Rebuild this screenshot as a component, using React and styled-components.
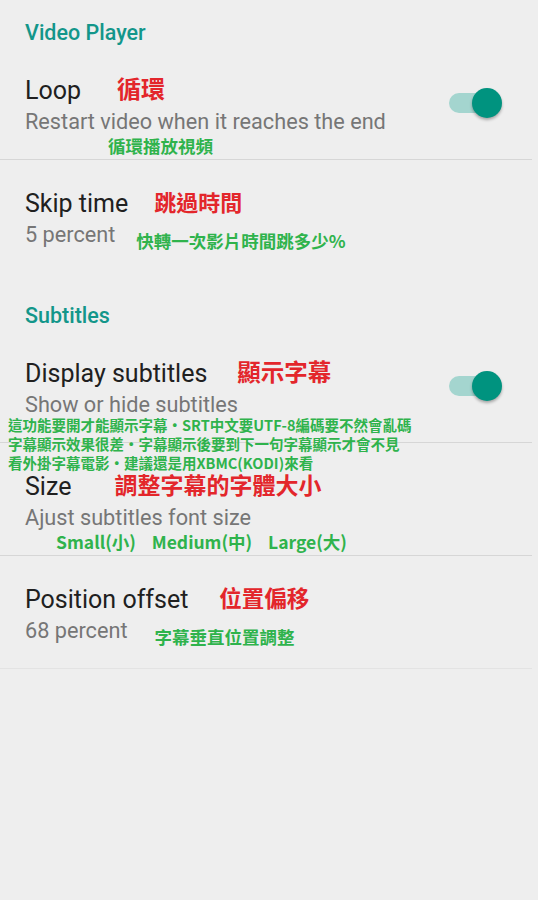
import React from 'react';
import styled, { createGlobalStyle } from 'styled-components';

const GlobalStyle = createGlobalStyle`
  html, body {
    margin: 0;
    padding: 0;
    background: #eeeeee;
  }
  body {
    font-family: Roboto, "Noto Sans", "Noto Sans CJK TC", sans-serif;
  }
`;

const SECTIONS = [
  {
    title: 'Video Player',
    first: true,
    items: [
      {
        title: 'Loop',
        redNote: '循環',
        redSize: 24,
        redGap: 36,
        summary: 'Restart video when it reaches the end',
        below: '循環播放視頻',
        belowGap: 83,
        toggle: true,
        divider: true,
      },
      {
        title: 'Skip time',
        redNote: '跳過時間',
        redSize: 22,
        redGap: 26,
        summary: '5 percent',
        inlineNote: '快轉一次影片時間跳多少%',
        inlineGap: 21,
      },
    ],
  },
  {
    title: 'Subtitles',
    items: [
      {
        title: 'Display subtitles',
        redNote: '顯示字幕',
        redSize: 23.5,
        redGap: 30,
        summary: 'Show or hide subtitles',
        toggle: true,
        divider: true,
        overlay: [
          '這功能要開才能顯示字幕・SRT中文要UTF-8編碼要不然會亂碼',
          '字幕顯示效果很差・字幕顯示後要到下一句字幕顯示才會不見',
          '看外掛字幕電影・建議還是用XBMC(KODI)來看',
        ],
      },
      {
        title: 'Size',
        redNote: '調整字幕的字體大小',
        redSize: 23,
        redGap: 43,
        summary: 'Ajust subtitles font size',
        below: 'Small(小)\u00a0\u00a0\u00a0\u00a0Medium(中)\u00a0\u00a0\u00a0\u00a0Large(大)',
        belowGap: 31,
        divider: true,
      },
      {
        title: 'Position offset',
        redNote: '位置偏移',
        redSize: 22.5,
        redGap: 31,
        summary: '68 percent',
        inlineNote: '字幕垂直位置調整',
        inlineGap: 27,
        divider: true,
        faint: true,
      },
    ],
  },
];

export default function App() {
  return (
    <>
      <GlobalStyle />
      <Screen>
        {SECTIONS.map((section) => (
          <Category key={section.title}>
            <CategoryTitle first={section.first}>{section.title}</CategoryTitle>
            {section.items.map((item) => (
              <PrefItem key={item.title} divider={item.divider} faint={item.faint}>
                <PrefText>
                  <TitleRow>
                    <PrefTitle>{item.title}</PrefTitle>
                    <RedNote gap={item.redGap} size={item.redSize}>{item.redNote}</RedNote>
                  </TitleRow>
                  <SummaryRow>
                    <PrefSummary>{item.summary}</PrefSummary>
                    {item.inlineNote && (
                      <GreenNote gap={item.inlineGap} drop>{item.inlineNote}</GreenNote>
                    )}
                  </SummaryRow>
                  {item.below && <GreenLine gap={item.belowGap}>{item.below}</GreenLine>}
                </PrefText>
                {item.toggle && (
                  <Switch>
                    <Track />
                    <Thumb />
                  </Switch>
                )}
                {item.overlay && (
                  <OverlayNote>
                    {item.overlay.map((line) => (
                      <div key={line}>{line}</div>
                    ))}
                  </OverlayNote>
                )}
              </PrefItem>
            ))}
          </Category>
        ))}
      </Screen>
    </>
  );
}

const Screen = styled.div`
  width: 538px;
  min-height: 900px;
  background: #eeeeee;
  display: flex;
  flex-direction: column;
`;

const Category = styled.section`
  display: flex;
  flex-direction: column;
`;

const CategoryTitle = styled.div`
  padding: ${({ first }) => (first ? '21px' : '31px')} 25px 2px 25px;
  height: 24px;
  line-height: 24px;
  font-size: 21.5px;
  font-weight: 500;
  color: #13968a;
`;

const PrefItem = styled.div`
  position: relative;
  min-height: 113px;
  box-sizing: border-box;
  padding: 28px 30px 0 25px;
  margin-right: ${({ divider }) => (divider ? '6px' : '0')};
  display: flex;
  align-items: center;
  border-bottom: ${({ divider, faint }) =>
    divider ? `1px solid ${faint ? '#e3e3e3' : '#d6d6d6'}` : 'none'};
`;

const PrefText = styled.div`
  flex: 1;
  align-self: flex-start;
  display: flex;
  flex-direction: column;
`;

const TitleRow = styled.div`
  display: flex;
  align-items: center;
  height: 30px;
`;

const PrefTitle = styled.span`
  font-size: 25px;
  color: #202020;
  white-space: nowrap;
`;

const RedNote = styled.span`
  margin-left: ${({ gap }) => gap}px;
  font-family: "Noto Sans CJK TC", sans-serif;
  font-weight: 700;
  font-size: ${({ size }) => size}px;
  color: #e3262b;
  white-space: nowrap;
  margin-top: -5px;
`;

const SummaryRow = styled.div`
  display: flex;
  align-items: center;
  height: 30px;
  margin-top: 1px;
`;

const PrefSummary = styled.span`
  font-size: 21.7px;
  color: #767676;
  white-space: nowrap;
`;

const GreenNote = styled.span`
  margin-left: ${({ gap }) => gap}px;
  margin-top: ${({ drop }) => (drop ? '13px' : '0')};
  font-family: "Noto Sans CJK TC", sans-serif;
  font-weight: 700;
  font-size: 17.5px;
  color: #2fb34c;
  white-space: nowrap;
`;

const GreenLine = styled.div`
  margin-left: ${({ gap }) => gap}px;
  height: 20px;
  line-height: 20px;
  font-family: "Noto Sans CJK TC", sans-serif;
  font-weight: 700;
  font-size: 17.5px;
  color: #2fb34c;
  white-space: nowrap;
`;

const OverlayNote = styled.div`
  position: absolute;
  left: 8px;
  top: 85px;
  font-family: "Noto Sans CJK TC", sans-serif;
  font-weight: 700;
  font-size: 14.5px;
  line-height: 19px;
  color: #2fb34c;
  white-space: nowrap;
`;

const Switch = styled.div`
  position: relative;
  width: 53px;
  height: 30px;
  flex-shrink: 0;
  display: flex;
  align-items: center;
  margin-top: -28px;
`;

const Track = styled.div`
  width: 51px;
  height: 20px;
  border-radius: 10px;
  background: #a4d5cf;
`;

const Thumb = styled.div`
  position: absolute;
  right: 0;
  top: 0;
  width: 30px;
  height: 30px;
  border-radius: 50%;
  background: #00937f;
  box-shadow: 0 2px 3px rgba(0, 0, 0, 0.3);
`;
